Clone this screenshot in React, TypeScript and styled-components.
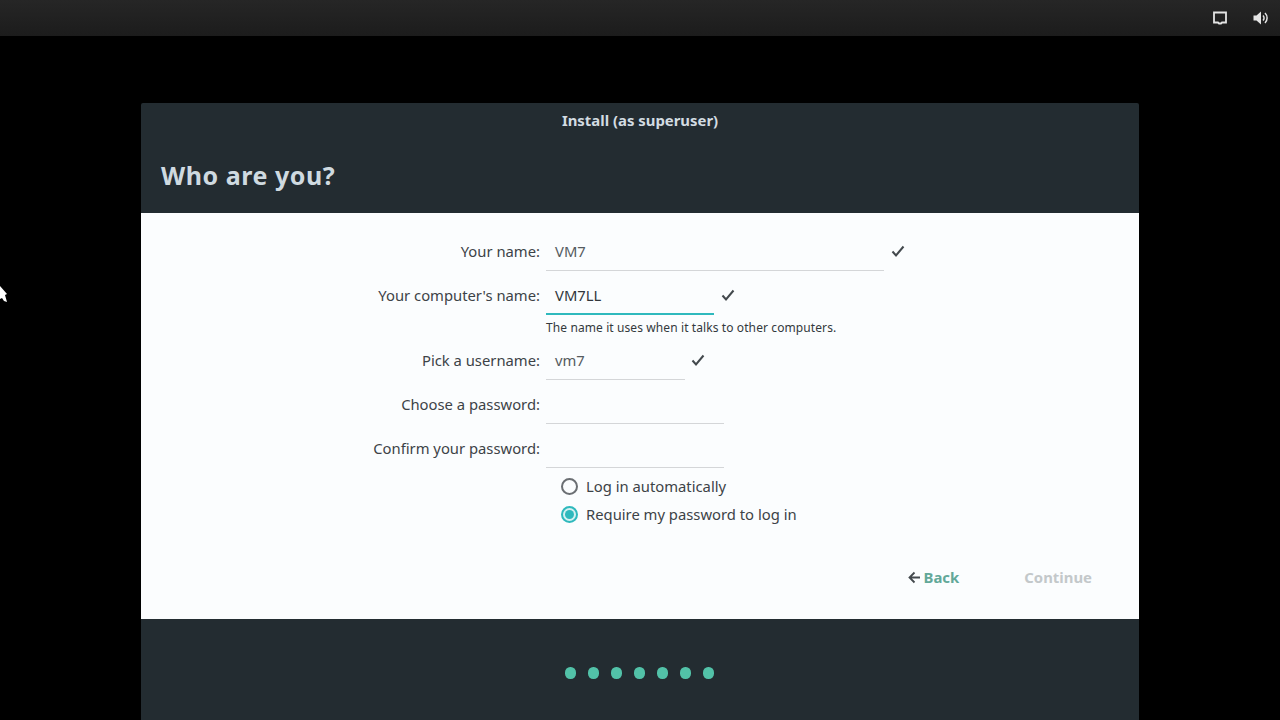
import React from "react";
import styled, { createGlobalStyle } from "styled-components";

const Global = createGlobalStyle`
  html, body { margin: 0; padding: 0; height: 720px; overflow: hidden; background: #000; }
  #root { height: 720px; }
  * { box-sizing: border-box; }
`;

const Screen = styled.div`
  position: relative;
  width: 1280px;
  height: 720px;
  background: #000;
  font-family: "Noto Sans", sans-serif;
  overflow: hidden;
`;

const TopBar = styled.header`
  height: 36px;
  background: linear-gradient(#262626, #1c1c1c);
  display: flex;
  align-items: center;
  justify-content: flex-end;
  gap: 23px;
  padding-right: 10px;
`;

const TrayIcon = styled.svg`
  width: 18px;
  height: 18px;
  display: block;
  color: #e4e4e4;
`;

const Pointer = styled.svg`
  position: absolute;
  left: 0;
  top: 285px;
  width: 8px;
  height: 18px;
`;

const Window = styled.main`
  width: 998px;
  height: 617px;
  margin: 67px auto 0;
  display: flex;
  flex-direction: column;
  border-radius: 2px 2px 0 0;
  overflow: hidden;
  background: #232c31;
`;

const Head = styled.div`
  height: 110px;
  display: flex;
  flex-direction: column;
`;

const WindowTitle = styled.div`
  height: 36px;
  padding-top: 7px;
  line-height: 21px;
  text-align: center;
  font-size: 14.9px;
  font-weight: 700;
  color: #d3dce2;
`;

const PageTitle = styled.h1`
  margin: 0;
  padding: 0 0 0 20px;
  line-height: 36px;
  margin-top: 18px;
  font-size: 25px;
  font-weight: 700;
  letter-spacing: 0.55px;
  color: #cfdae0;
`;

const Content = styled.section`
  height: 406px;
  background: #fbfdfe;
  padding-top: 18px;
  display: flex;
  flex-direction: column;
`;

const Form = styled.div`
  display: flex;
  flex-direction: column;
  gap: 4px;
  padding-left: 100px;
`;

const Row = styled.div`
  display: flex;
  align-items: center;
  height: 40px;
`;

const Label = styled.label`
  width: 299px;
  margin-right: 6px;
  padding-bottom: 1px;
  text-align: right;
  font-size: 14.8px;
  color: #3d4347;
`;

const Field = styled.div<{ $w: number; $focus?: boolean }>`
  width: ${(p) => p.$w}px;
  height: 40px;
  display: flex;
  align-items: center;
  padding: ${(p) => (p.$focus ? "1px" : "0")} 9px 0;
  font-size: 14.8px;
  color: ${(p) => (p.$focus ? "#31363b" : "#555b60")};
  border-bottom: ${(p) => (p.$focus ? "2px solid #2fb9bd" : "1px solid #d4d6d8")};
`;

const Check = styled.svg<{ $gap?: number }>`
  width: 14px;
  height: 14px;
  margin-left: ${(p) => p.$gap ?? 7}px;
  color: #43494d;
`;

const Hint = styled.div`
  height: 21px;
  margin-top: -4px;
  padding: 4px 0 0 305px;
  line-height: 18px;
  font-size: 12px;
  letter-spacing: 0.1px;
  color: #33393d;
`;

const RadioGroup = styled.div`
  padding: 4px 0 0 420px;
  display: flex;
  flex-direction: column;
`;

const RadioRow = styled.div`
  height: 28px;
  display: flex;
  align-items: center;
  gap: 8px;
  font-size: 14.8px;
  color: #3d4347;
`;

const Radio = styled.span<{ $on?: boolean }>`
  width: 17px;
  height: 17px;
  border-radius: 50%;
  border: 2px solid ${(p) => (p.$on ? "#2fb9bd" : "#6b6f73")};
  background: ${(p) => (p.$on ? "#d6f1f2" : "#fbfdfe")};
  display: flex;
  align-items: center;
  justify-content: center;
  &::after {
    content: "";
    display: ${(p) => (p.$on ? "block" : "none")};
    width: 9px;
    height: 9px;
    border-radius: 50%;
    background: #2fb9bd;
  }
`;

const Actions = styled.div`
  margin-top: 35px;
  height: 28px;
  display: flex;
  justify-content: flex-end;
  align-items: center;
  padding-right: 47px;
  font-size: 14.9px;
  font-weight: 700;
`;

const BackButton = styled.span`
  display: flex;
  align-items: center;
  gap: 3px;
  color: #62a899;
  margin-right: 65px;
`;

const ArrowIcon = styled.svg`
  width: 13px;
  height: 13px;
  color: #43494d;
`;

const ContinueButton = styled.span`
  color: #c3c8ca;
`;

const Foot = styled.footer`
  flex: 1;
  display: flex;
  justify-content: center;
  align-items: flex-start;
  padding: 48px 1px 0 0;
  gap: 11.5px;
`;

const Dot = styled.span`
  width: 11.5px;
  height: 11.5px;
  border-radius: 45%;
  background: #52c2a8;
`;

const Tick = ({ gap }: { gap?: number }) => (
  <Check viewBox="0 0 14 14" $gap={gap}>
    <path d="M1.5 7.5 L5 11.5 L12.5 2.5" fill="none" stroke="currentColor" strokeWidth="2" />
  </Check>
);

export default function App() {
  return (
    <Screen>
      <Global />
      <TopBar>
        <TrayIcon viewBox="0 0 18 18">
          <path
            d="M3 3.5 H15 V13.5 H11 L10 14.5 H8 L7 13.5 H3 Z"
            fill="none"
            stroke="currentColor"
            strokeWidth="1.8"
          />
        </TrayIcon>
        <TrayIcon viewBox="0 0 18 18">
          <path d="M1.5 6.5 H4.5 L9 2.5 V15.5 L4.5 11.5 H1.5 Z" fill="currentColor" />
          <path d="M11 6.5 A3.5 3.5 0 0 1 11 11.5" fill="none" stroke="currentColor" strokeWidth="1.5" />
          <path d="M13 4 A7 7 0 0 1 13 14" fill="none" stroke="currentColor" strokeWidth="1.5" />
        </TrayIcon>
      </TopBar>
      <Pointer viewBox="0 0 8 18">
        <path d="M0 1 L7 9 L5 10 L7 17 L4 16 L2 13 L0 14 Z" fill="#fff" />
      </Pointer>
      <Window>
        <Head>
          <WindowTitle>Install (as superuser)</WindowTitle>
          <PageTitle>Who are you?</PageTitle>
        </Head>
        <Content>
          <Form>
            <Row>
              <Label>Your name:</Label>
              <Field $w={338}>VM7</Field>
              <Tick />
            </Row>
            <Row>
              <Label>Your computer's name:</Label>
              <Field $w={168} $focus>VM7LL</Field>
              <Tick />
            </Row>
            <Hint>The name it uses when it talks to other computers.</Hint>
            <Row>
              <Label>Pick a username:</Label>
              <Field $w={139}>vm7</Field>
              <Tick gap={6} />
            </Row>
            <Row>
              <Label>Choose a password:</Label>
              <Field $w={178} />
            </Row>
            <Row>
              <Label>Confirm your password:</Label>
              <Field $w={178} />
            </Row>
          </Form>
          <RadioGroup>
            <RadioRow>
              <Radio />
              Log in automatically
            </RadioRow>
            <RadioRow>
              <Radio $on />
              Require my password to log in
            </RadioRow>
          </RadioGroup>
          <Actions>
            <BackButton>
              <ArrowIcon viewBox="0 0 13 13">
                <path d="M12 6.5 H2 M6.5 1.5 L1.5 6.5 L6.5 11.5" fill="none" stroke="currentColor" strokeWidth="1.8" />
              </ArrowIcon>
              Back
            </BackButton>
            <ContinueButton>Continue</ContinueButton>
          </Actions>
        </Content>
        <Foot>
          {Array.from({ length: 7 }, (_, i) => (
            <Dot key={i} />
          ))}
        </Foot>
      </Window>
    </Screen>
  );
}
